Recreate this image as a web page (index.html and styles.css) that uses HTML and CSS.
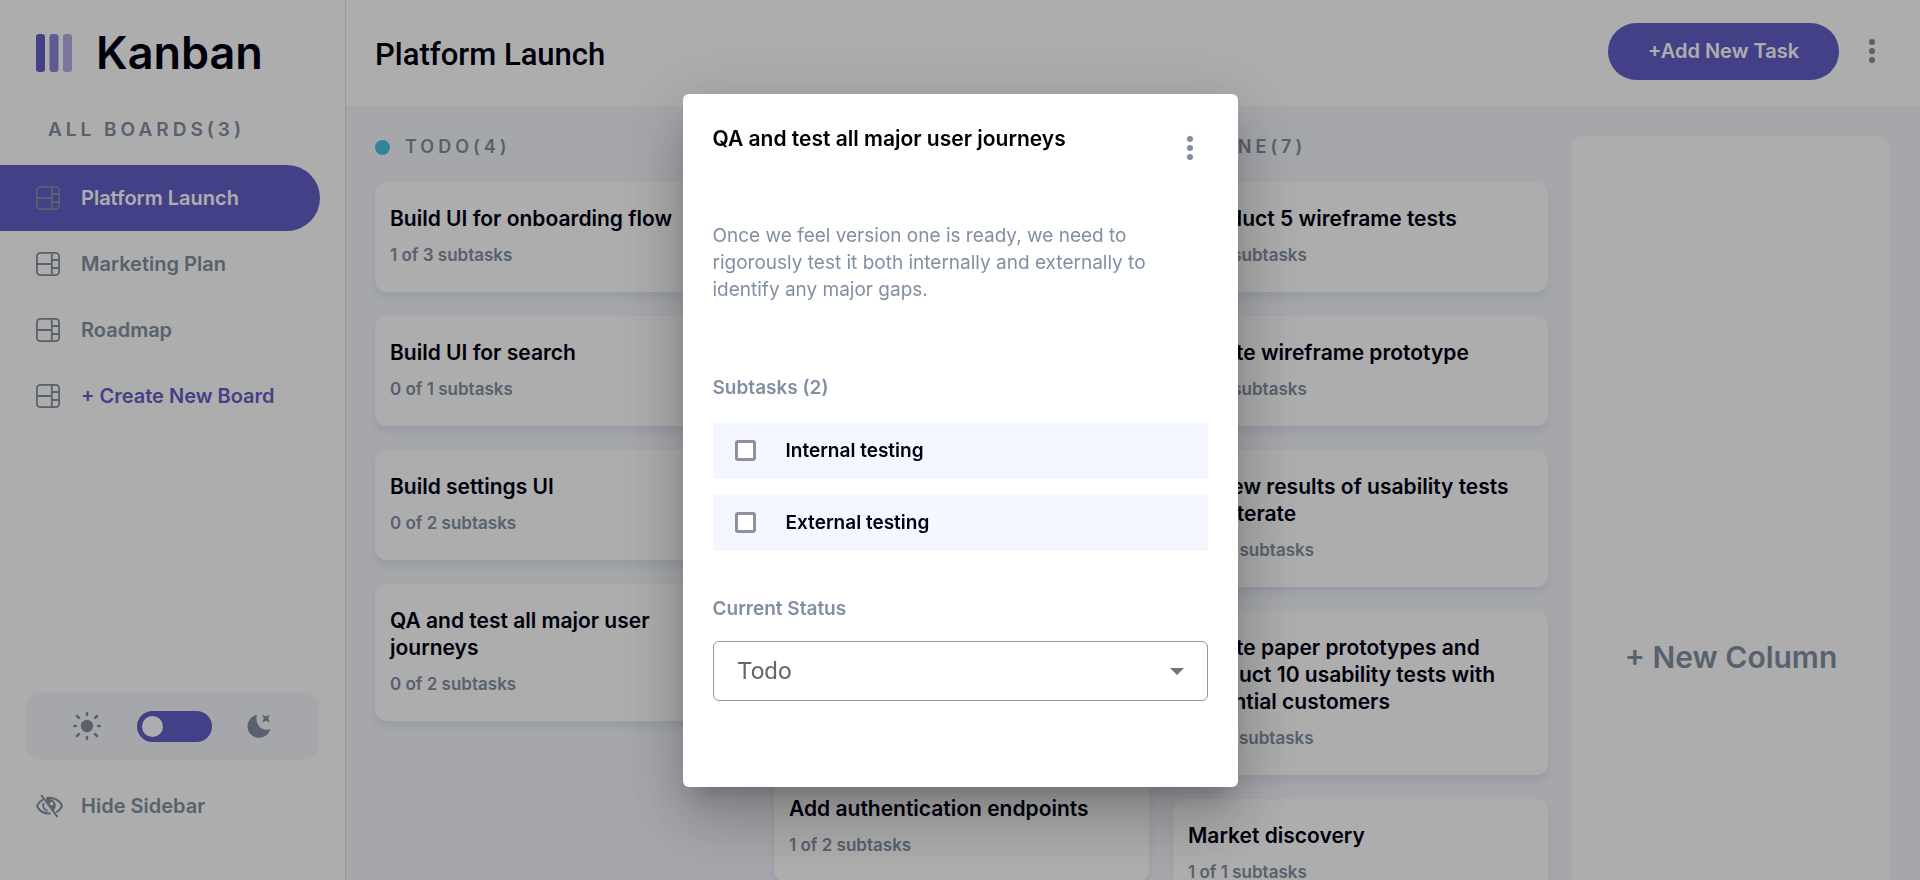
FILE: index.html
```html
<!DOCTYPE html>
<html lang="en">
<head>
<meta charset="utf-8">
<meta name="viewport" content="width=device-width, initial-scale=1">
<title>Kanban</title>
<link rel="stylesheet" href="styles.css">
</head>
<body>
<svg class="defs" aria-hidden="true">
  <symbol id="board" viewBox="0 0 24 24">
    <g fill="none" stroke="currentColor" stroke-width="1.8"><rect x="0.9" y="0.9" width="22.2" height="22.2" rx="3.4"/><path d="M15.8 1v22M1 12h14.8M15.8 8h7.300M15.8 16h7.300"/></g>
  </symbol>
  <symbol id="dots" viewBox="0 0 6 24"><circle cx="3" cy="3" r="3"/><circle cx="3" cy="12" r="3"/><circle cx="3" cy="21" r="3"/></symbol>
</svg>
<div class="app">
  <aside class="sidebar">
    <div class="brand">
      <svg class="brand-mark" viewBox="0 0 36 38" aria-hidden="true"><rect width="9" height="38" rx="3"/><rect x="13.500" width="9" height="38" rx="3" opacity=".75"/><rect x="27" width="9" height="38" rx="3" opacity=".5"/></svg>
      <span class="brand-name">Kanban</span>
    </div>
    <h2 class="boards-title">ALL BOARDS(3)</h2>
    <nav class="boards">
      <a class="board-link active" href="#platform"><svg class="icon"><use href="#board"/></svg>Platform Launch</a>
      <a class="board-link" href="#marketing"><svg class="icon"><use href="#board"/></svg>Marketing Plan</a>
      <a class="board-link" href="#roadmap"><svg class="icon"><use href="#board"/></svg>Roadmap</a>
      <button class="board-link create" type="button"><svg class="icon"><use href="#board"/></svg>+ Create New Board</button>
    </nav>
    <div class="theme">
      <svg class="sun" viewBox="0 0 28 28" aria-hidden="true"><circle cx="14" cy="14" r="6.200"/><path d="M14 1.300v1.600M14 25.100v1.600M1.300 14h1.600M25.100 14h1.600M4 4l1.900 1.900M22.100 22.100l1.900 1.900M4 24l1.900-1.900M22.100 5.900L24 4"/></svg>
      <input class="switch" type="checkbox" aria-label="Dark theme">
      <svg class="moon" viewBox="0 0 24 24" aria-hidden="true"><path d="M10 .8A11.600 11.600 0 1 0 23.300 15C16 18 7.500 11.500 9.800 1.500z"/><path d="M15.200.8l3.800 1.700L22.800.8l-1.600 3.700 1.600 3.900L19 6.800l-3.800 1.600 1.600-3.900z"/></svg>
    </div>
    <button class="hide" type="button">
      <svg class="eye" viewBox="0 0 27 24" aria-hidden="true">
        <path class="line" d="M7 5.500C4 7.200 2 9.500 1 12c2 4.500 7 7.800 13.600 7.600M10.500 4c7-1.200 13.300 2.500 15.500 8-1 2.600-3 4.800-5.700 6.100M5.200 1l16.300 22"/>
        <path class="line" d="M7.600 9c-1.200 3.500.6 6.800 4 8"/>
        <path fill-rule="evenodd" d="M9.500 5.200C13 4 18.200 6 19.500 9.500c.8 3-.3 5.600-1.800 7zM15.600 8a1.700 1.700 0 1 0 .1 3.400 1.700 1.700 0 0 0-.1-3.400z"/>
      </svg>Hide Sidebar</button>
  </aside>
  <div class="main">
    <header class="topbar">
      <h1 class="topbar-title">Platform Launch</h1>
      <button class="add" type="button">+Add New Task</button>
      <button class="more" type="button" aria-label="Board menu"><svg class="dots"><use href="#dots"/></svg></button>
    </header>
    <main class="board">
      <section class="column">
        <h2 class="column-title"><span class="bullet todo"></span>TODO(4)</h2>
        <article class="card"><h3>Build UI for onboarding flow</h3><p>1 of 3 subtasks</p></article>
        <article class="card"><h3>Build UI for search</h3><p>0 of 1 subtasks</p></article>
        <article class="card"><h3>Build settings UI</h3><p>0 of 2 subtasks</p></article>
        <article class="card"><h3>QA and test all major user journeys</h3><p>0 of 2 subtasks</p></article>
      </section>
      <section class="column">
        <h2 class="column-title"><span class="bullet doing"></span>DOING(6)</h2>
        <article class="card"><h3>Design settings and search<br>pages</h3><p>1 of 3 subtasks</p></article>
        <article class="card"><h3>Add account management<br>endpoints</h3><p>2 of 3 subtasks</p></article>
        <article class="card"><h3>Design onboarding flow</h3><p>1 of 3 subtasks</p></article>
        <article class="card"><h3>Add search endpoints</h3><p>1 of 2 subtasks</p></article>
        <article class="card"><h3>Add authentication endpoints</h3><p>1 of 2 subtasks</p></article>
      </section>
      <section class="column">
        <h2 class="column-title"><span class="bullet done"></span>DONE(7)</h2>
        <article class="card"><h3>Conduct 5 wireframe tests</h3><p>1 of 1 subtasks</p></article>
        <article class="card"><h3>Create wireframe prototype</h3><p>1 of 1 subtasks</p></article>
        <article class="card"><h3>Review results of usability tests and iterate</h3><p>3 of 3 subtasks</p></article>
        <article class="card"><h3>Create paper prototypes and conduct 10 usability tests with potential customers</h3><p>2 of 2 subtasks</p></article>
        <article class="card"><h3>Market discovery</h3><p>1 of 1 subtasks</p></article>
        <article class="card"><h3>Competitor analysis</h3><p>2 of 2 subtasks</p></article>
        <article class="card"><h3>Research the market</h3><p>2 of 2 subtasks</p></article>
      </section>
      <button class="new-column" type="button">+ New Column</button>
    </main>
  </div>
</div>
<div class="backdrop">
  <div class="dialog" role="dialog" aria-modal="true" aria-labelledby="task-title">
    <div class="dialog-head">
      <h2 class="dialog-title" id="task-title">QA and test all major user journeys</h2>
      <button class="more" type="button" aria-label="Task menu"><svg class="dots"><use href="#dots"/></svg></button>
    </div>
    <p class="description">Once we feel version one is ready, we need to rigorously test it both internally and externally to identify any major gaps.</p>
    <h3 class="label">Subtasks (2)</h3>
    <div class="subtasks">
      <label class="subtask"><input class="check" type="checkbox">Internal testing</label>
      <label class="subtask"><input class="check" type="checkbox">External testing</label>
    </div>
    <label class="label" for="status">Current Status</label>
    <div class="select-wrap">
      <select class="select" id="status"><option>Todo</option><option>Doing</option><option>Done</option></select>
      <svg class="caret" viewBox="0 0 14 7" aria-hidden="true"><path d="M0 0h14L7 7z"/></svg>
    </div>
  </div>
</div>
</body>
</html>
```
FILE: styles.css
```css
:root {
  --purple: #635fc7;
  --muted: #828fa3;
  --ink: #000112;
  --canvas: #f4f7fd;
}

* {
  box-sizing: border-box;
}

body {
  margin: 0;
  overflow: hidden;
  font-family: "Inter", "Liberation Sans", sans-serif;
  font-weight: 600;
  color: var(--ink);
}

h1, h2, h3, p {
  margin: 0;
  font-weight: inherit;
}

button, select, input {
  margin: 0;
  font: inherit;
}

button {
  padding: 0;
  border: 0;
  background: none;
  color: inherit;
  cursor: pointer;
}

a {
  color: inherit;
  text-decoration: none;
}

svg {
  flex: none;
  fill: currentColor;
}

.defs {
  display: none;
}

.app {
  display: flex;
  height: 100vh;
  overflow: hidden;
}

/* Sidebar */
.sidebar {
  display: flex;
  flex: none;
  flex-direction: column;
  width: 346px;
  padding-bottom: 56px;
  border-right: 1px solid #dfe2ea;
  background: #fff;
  color: var(--muted);
}

.brand {
  display: flex;
  align-items: center;
  gap: 24px;
  height: 106px;
  padding-left: 36px;
}

.brand-mark {
  width: 36px;
  height: 38px;
  color: var(--purple);
}

.brand-name {
  font-size: 45px;
  line-height: 56px;
  color: var(--ink);
}

.boards-title {
  padding: 11px 0 22px 48px;
  font-size: 19px;
  line-height: 26px;
  letter-spacing: 4px;
}

.board-link {
  display: flex;
  align-items: center;
  gap: 21px;
  width: 320px;
  height: 66px;
  padding-left: 36px;
  border-radius: 0 66px 66px 0;
  font-size: 20px;
}

.board-link.active {
  background: var(--purple);
  color: #fff;
}

.board-link.create {
  color: var(--purple);
}

.icon {
  width: 24px;
  height: 24px;
  color: var(--muted);
}

.theme {
  display: flex;
  align-items: center;
  justify-content: space-between;
  height: 68px;
  margin: auto 26px 28px;
  padding: 0 48px 0 47px;
  border-radius: 15px;
  background: var(--canvas);
}

.sun {
  width: 28px;
  height: 28px;
  stroke: currentColor;
  stroke-width: 2.5;
  stroke-linecap: round;
}

.sun circle {
  stroke: none;
}

.moon {
  width: 24px;
  height: 24px;
}

.switch {
  display: flex;
  align-items: center;
  width: 75px;
  height: 31px;
  padding: 0 5px;
  border-radius: 16px;
  background: var(--purple);
  appearance: none;
}

.switch::before {
  width: 21px;
  height: 21px;
  border-radius: 50%;
  background: #fff;
  content: "";
}

.hide {
  display: flex;
  align-items: center;
  gap: 18px;
  height: 36px;
  padding-left: 36px;
  font-size: 20px;
}

.eye {
  width: 27px;
  height: 24px;
}

.eye .line {
  fill: none;
  stroke: currentColor;
  stroke-width: 2;
}

/* Top bar */
.main {
  display: flex;
  flex: 1;
  flex-direction: column;
  min-width: 0;
}

.topbar {
  display: flex;
  flex: none;
  align-items: center;
  height: 106px;
  padding: 0 30px 4px 29px;
  background: #fff;
}

.topbar-title {
  flex: 1;
  padding-top: 6px;
  font-family: Roboto, sans-serif;
  font-size: 31px;
  font-weight: 500;
}

.add {
  width: 231px;
  height: 57px;
  border-radius: 29px;
  background: var(--purple);
  color: #fff;
  font-size: 20px;
}

.more {
  display: flex;
  justify-content: center;
  width: 36px;
  color: var(--muted);
}

.topbar .more {
  margin-left: 15px;
}

.dots {
  width: 6px;
  height: 24px;
}

/* Board */
.board {
  display: grid;
  flex: 1;
  grid-template-columns: repeat(3, 375px) 1fr;
  gap: 24px;
  padding: 30px 30px 30px 29px;
  background: var(--canvas);
}

.column {
  display: flex;
  flex-direction: column;
  gap: 24px;
}

.column-title {
  display: flex;
  align-items: center;
  gap: 15px;
  font-size: 18px;
  line-height: 22px;
  letter-spacing: 4px;
  color: var(--muted);
}

.bullet {
  width: 15px;
  height: 15px;
  border-radius: 50%;
}

.todo {
  background: #49c4e5;
}

.doing {
  background: #8471f2;
}

.done {
  background: #67e2ae;
}

.card {
  padding: 23px 15px 25px;
  border-radius: 12px;
  background: #fff;
  box-shadow: 0 6px 9px rgba(54, 78, 126, 0.1);
}

.card h3 {
  font-size: 21px;
  line-height: 27px;
}

.card p {
  padding-top: 11px;
  font-size: 17px;
  line-height: 24px;
  color: var(--muted);
}

.new-column {
  border-radius: 12px;
  background: #fff;
  color: var(--muted);
  font-size: 30px;
}

/* Task dialog */
.backdrop {
  position: fixed;
  inset: 0;
  display: flex;
  align-items: center;
  justify-content: center;
  background: rgba(0, 0, 0, 0.32);
}

.dialog {
  width: 555px;
  padding: 31px 30px 86px;
  border-radius: 6px;
  background: #fff;
  box-shadow: 0 16px 22px -10px rgba(0, 0, 0, 0.2), 0 36px 57px 4px rgba(0, 0, 0, 0.14), 0 14px 69px 12px rgba(0, 0, 0, 0.12);
}

.dialog-head {
  display: flex;
  justify-content: space-between;
}

.dialog-title {
  font-size: 21px;
  line-height: 28px;
  color: #000;
}

.dialog-head .more {
  padding: 11px 0 13px;
}

.description {
  padding: 49px 30px 72px 0;
  font-size: 19px;
  font-weight: 400;
  line-height: 27px;
  color: var(--muted);
}

.label {
  display: block;
  font-size: 19px;
  line-height: 26px;
  color: var(--muted);
}

.subtasks {
  display: grid;
  gap: 15px;
  padding: 21px 0 45px;
}

.subtask {
  display: flex;
  align-items: center;
  gap: 30px;
  height: 57px;
  padding-left: 22px;
  background: #f4f7ff;
  font-size: 19px;
}

.check {
  width: 21px;
  height: 21px;
  border: 3px solid #918fa0;
  border-radius: 3px;
  background: #fff;
  appearance: none;
}

.select-wrap {
  position: relative;
  padding-top: 19px;
}

.select {
  display: block;
  width: 100%;
  height: 60px;
  padding: 0 24px;
  border: 1px solid #979797;
  border-radius: 6px;
  background: #fff;
  color: #666;
  font-family: Roboto, sans-serif;
  font-size: 24px;
  font-weight: 400;
  appearance: none;
}

.caret {
  position: absolute;
  right: 24px;
  bottom: 26px;
  width: 14px;
  height: 7px;
  color: #757575;
  pointer-events: none;
}
```
